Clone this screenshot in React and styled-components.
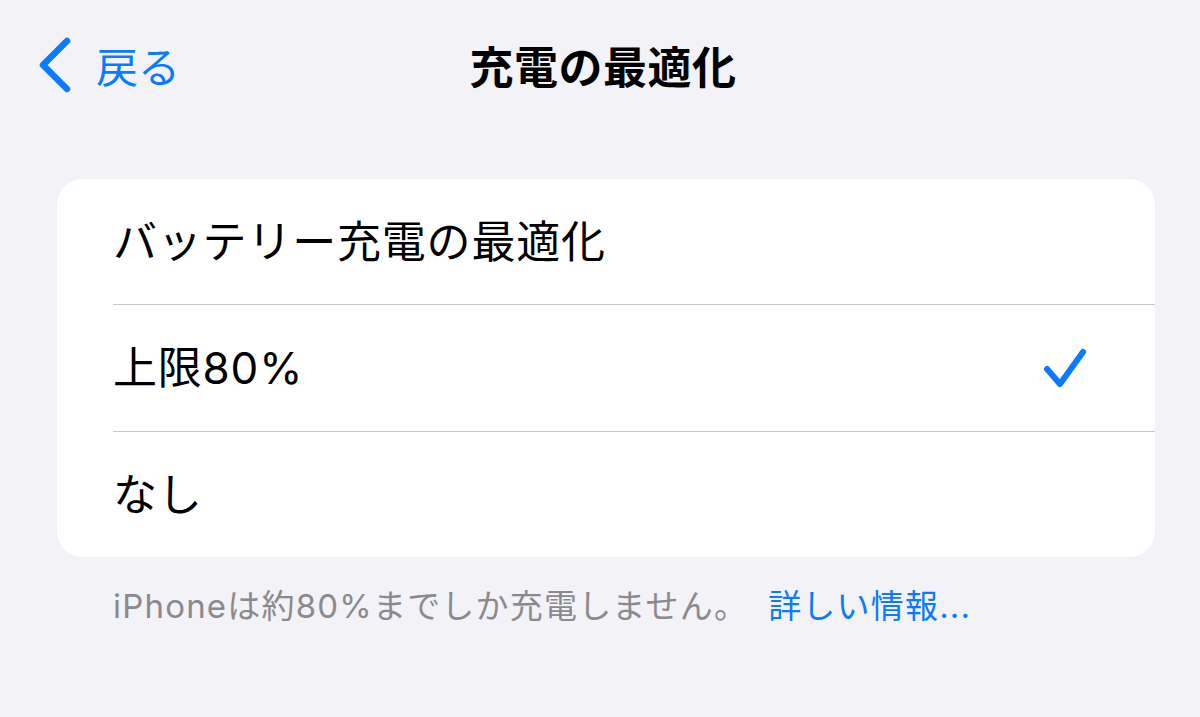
import React from "react";
import styled, { createGlobalStyle } from "styled-components";

const Global = createGlobalStyle`
  html, body { margin: 0; padding: 0; background: #f2f2f7; }
  body { font-family: "Inter", "Noto Sans CJK JP", sans-serif; -webkit-font-smoothing: antialiased; }
`;

const Page = styled.div`
  width: 1200px;
  height: 717px;
  background: #f2f2f7;
  display: flex;
  flex-direction: column;
  box-sizing: border-box;
`;

const NavBar = styled.div`
  height: 130px;
  display: grid;
  grid-template-columns: 1fr auto 1fr;
  align-items: center;
  padding: 0 38px;
`;

const BackButton = styled.div`
  display: flex;
  align-items: center;
  gap: 24px;
  color: #0a7aff;
  font-size: 42px;
  font-family: "Noto Sans CJK JP", sans-serif;
  line-height: 1;
`;

const Title = styled.div`
  font-size: 44px;
  font-weight: 700;
  color: #000;
  font-family: "Noto Sans CJK JP", sans-serif;
  line-height: 1;
  letter-spacing: 0.5px;
  margin-left: 6px;
`;

const Card = styled.div`
  margin: 49px 45px 0 57px;
  background: #fff;
  border-radius: 26px;
  overflow: hidden;
`;

const Row = styled.div`
  height: ${(p) => p.$h}px;
  margin-left: 56px;
  padding-right: 68px;
  display: flex;
  align-items: center;
  justify-content: space-between;
  border-top: ${(p) => (p.$first ? "none" : "1.5px solid #c8c8cc")};
  box-sizing: border-box;
  font-size: 44px;
  color: #000;
  line-height: 1;
  letter-spacing: 0.8px;
`;

const Footer = styled.div`
  margin: 28px 0 0 113px;
  font-size: 33px;
  color: #8a8a8e;
  line-height: 1.3;
  letter-spacing: 1.2px;
`;

const Link = styled.span`
  color: #0a7aff;
  margin-left: 20px;
`;

const Chevron = () => (
  <svg width="34" height="56" viewBox="0 0 34 56" fill="none">
    <path d="M29 4 L5 28 L29 52" stroke="#0a7aff" strokeWidth="6.5" strokeLinecap="round" strokeLinejoin="round" />
  </svg>
);

const Check = () => (
  <svg width="44" height="42" viewBox="0 0 44 42" fill="none">
    <path d="M4 22 L17 37 L40 5" stroke="#0a7aff" strokeWidth="6" strokeLinecap="round" strokeLinejoin="round" />
  </svg>
);

export default function App() {
  return (
    <Page>
      <Global />
      <NavBar>
        <BackButton>
          <Chevron />
          <span>戻る</span>
        </BackButton>
        <Title>充電の最適化</Title>
        <div />
      </NavBar>
      <Card>
        <Row $first $h={125}>バッテリー充電の最適化</Row>
        <Row $h={127}>
          <span>上限80%</span>
          <Check />
        </Row>
        <Row $h={126}>なし</Row>
      </Card>
      <Footer>
        iPhoneは約80%までしか充電しません。<Link>詳しい情報...</Link>
      </Footer>
    </Page>
  );
}
